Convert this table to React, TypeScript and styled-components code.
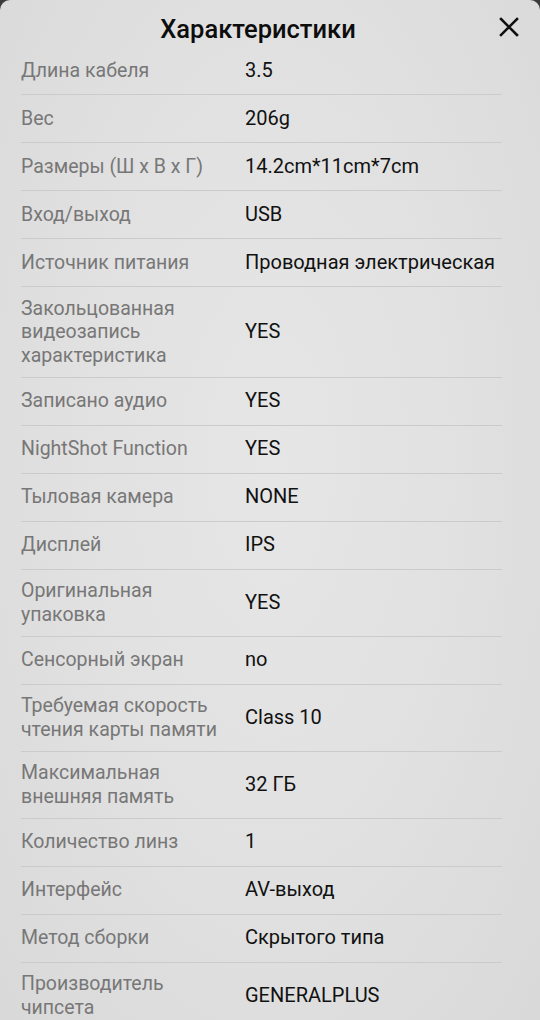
import React from "react";
import styled, { createGlobalStyle } from "styled-components";

const GlobalStyle = createGlobalStyle`
  html, body { margin: 0; padding: 0; background: #3a3a3a; }
  body { font-family: Roboto, "Noto Sans", "Liberation Sans", sans-serif; }
  * { box-sizing: border-box; }
`;

const Sheet = styled.div`
  width: 540px;
  height: 1020px;
  overflow: hidden;
  border-radius: 10px 10px 0 0;
  background: radial-gradient(ellipse at 50% 45%, #e6e6e6 0%, #e1e1e1 50%, #d9d9d9 100%);
  display: flex;
  flex-direction: column;
`;

const Header = styled.header`
  height: 47px;
  flex: none;
  display: flex;
  align-items: center;
  justify-content: center;
  position: relative;
  padding-top: 11px;
`;

const Title = styled.h1`
  margin: 0;
  font-size: 25.5px;
  font-weight: 500;
  color: #0d0d0d;
  padding-right: 24px;
`;

const CloseButton = styled.button`
  position: absolute;
  right: 21px;
  top: 17px;
  width: 20px;
  height: 20px;
  padding: 0;
  border: none;
  background: transparent;
  display: flex;
  align-items: center;
  justify-content: center;
`;

const List = styled.div`
  padding: 0 38px 0 21px;
  display: flex;
  flex-direction: column;
`;

const Row = styled.div`
  display: grid;
  grid-template-columns: 224px 1fr;
  align-items: center;
  min-height: 48px;
  padding: 9.5px 0;
  border-bottom: 1px solid #cbcbcb;
  line-height: 23.5px;
`;

const Label = styled.div`
  color: #777777;
  font-size: 19.5px;
  padding-right: 10px;
`;

const Value = styled.div`
  color: #111111;
  font-size: 20px;
`;

const specs: [string, string][] = [
  ["Длина кабеля", "3.5"],
  ["Вес", "206g"],
  ["Размеры (Ш x В x Г)", "14.2cm*11cm*7cm"],
  ["Вход/выход", "USB"],
  ["Источник питания", "Проводная электрическая"],
  ["Закольцованная видеозапись характеристика", "YES"],
  ["Записано аудио", "YES"],
  ["NightShot Function", "YES"],
  ["Тыловая камера", "NONE"],
  ["Дисплей", "IPS"],
  ["Оригинальная упаковка", "YES"],
  ["Сенсорный экран", "no"],
  ["Требуемая скорость чтения карты памяти", "Class 10"],
  ["Максимальная внешняя память", "32 ГБ"],
  ["Количество линз", "1"],
  ["Интерфейс", "AV-выход"],
  ["Метод сборки", "Скрытого типа"],
  ["Производитель чипсета", "GENERALPLUS"],
];

export default function App() {
  return (
    <>
      <GlobalStyle />
      <Sheet>
        <Header>
          <Title>Характеристики</Title>
          <CloseButton aria-label="Закрыть">
            <svg width="20" height="20" viewBox="0 0 20 20">
              <path d="M2 2 L18 18 M18 2 L2 18" stroke="#111" strokeWidth="2.6" strokeLinecap="square" />
            </svg>
          </CloseButton>
        </Header>
        <List>
          {specs.map(([k, v]) => (
            <Row key={k}>
              <Label>{k}</Label>
              <Value>{v}</Value>
            </Row>
          ))}
        </List>
      </Sheet>
    </>
  );
}
